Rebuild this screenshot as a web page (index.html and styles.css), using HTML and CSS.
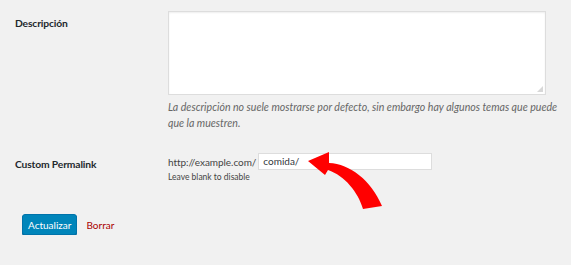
FILE: index.html
```html
<!DOCTYPE html>
<html lang="es">
<head>
  <meta charset="UTF-8">
  <title>Editar categoría</title>
  <link rel="stylesheet" href="styles.css">
</head>
<body>
  <div class="form-table">
    <div class="form-row row-desc">
      <div class="form-label">Descripción</div>
      <div class="form-field">
        <div class="textarea"><span class="grip"></span></div>
        <p class="description">La descripción no suele mostrarse por defecto, sin embargo hay algunos temas que puede que la muestren.</p>
      </div>
    </div>
    <div class="form-row row-permalink">
      <div class="form-label">Custom Permalink</div>
      <div class="form-field">
        <div class="permalink-line">
          <span class="base-url">http://example.com/</span>
          <div class="text-input">comida/</div>
        </div>
        <div class="hint">Leave blank to disable</div>
        <!-- flecha roja señalando el campo -->
        <svg class="arrow" width="90" height="70" viewBox="300 150 90 70">
          <path d="M308,165 L329,156 L329,167 C350,168 371,184 382,210 L363,213 C358,196 345,180 328,174 L325,179 Z" fill="#ff0000"/>
        </svg>
      </div>
    </div>
  </div>
  <div class="submit-row">
    <button class="button-primary">Actualizar</button>
    <a href="#" class="delete-link">Borrar</a>
  </div>
</body>
</html>
```

FILE: styles.css
```css
body {
  font-family: 'Lato', 'Noto Sans', Arial, sans-serif;
  margin: 0;
  padding: 0;
  background: #f1f1f1;
  color: #23282d;
  font-size: 10px;
}
.form-table {
  padding-top: 11px;
}
.form-row {
  display: flex;
}
.form-label {
  width: 153px;
  padding-left: 15px;
  font-weight: 700;
  font-size: 10.3px;
  line-height: 16px;
  letter-spacing: -0.15px;
}
.row-desc .form-label {
  padding-top: 4px;
}
.form-field {
  flex: 1;
  position: relative;
}
.textarea {
  width: 376px;
  height: 82px;
  background: #fff;
  border: 1px solid #ddd;
  box-shadow: inset 0 1px 2px rgba(0,0,0,0.07);
  position: relative;
}
.grip {
  position: absolute;
  right: 2px;
  bottom: 2px;
  width: 6px;
  height: 6px;
  background: radial-gradient(circle, #aaa 0.6px, transparent 0.8px) 0 0 / 2px 2px;
  clip-path: polygon(100% 0, 100% 100%, 0 100%);
}
.description {
  margin: 4px 0 0;
  font-style: italic;
  color: #666;
  font-size: 10.6px;
  line-height: 16px;
  padding-right: 10px;
}
.row-permalink {
  margin-top: 22px;
}
.row-permalink .form-label {
  padding-top: 3px;
}
.permalink-line {
  display: flex;
  align-items: center;
  gap: 2px;
}
.base-url {
  color: #444;
  font-size: 10px;
  letter-spacing: -0.05px;
}
.text-input {
  width: 164px;
  height: 15px;
  line-height: 15px;
  padding: 0 4px;
  background: #fff;
  border: 1px solid #ddd;
  color: #32373c;
  font-size: 10px;
}
.hint {
  font-size: 8.5px;
  color: #444;
  margin-top: 2px;
}
.arrow {
  position: absolute;
  left: 132px;
  top: -7px;
}
.submit-row {
  display: flex;
  align-items: center;
  gap: 9px;
  padding: 32px 0 0 22px;
}
.button-primary {
  font-family: inherit;
  font-size: 10px;
  height: 21px;
  padding: 0 5px;
  background: #0085ba;
  border: 1px solid #0073aa;
  border-radius: 3px;
  color: #fff;
  box-shadow: 0 1px 0 #006799;
}
.delete-link {
  color: #a00;
  text-decoration: none;
  font-size: 10px;
}
```
